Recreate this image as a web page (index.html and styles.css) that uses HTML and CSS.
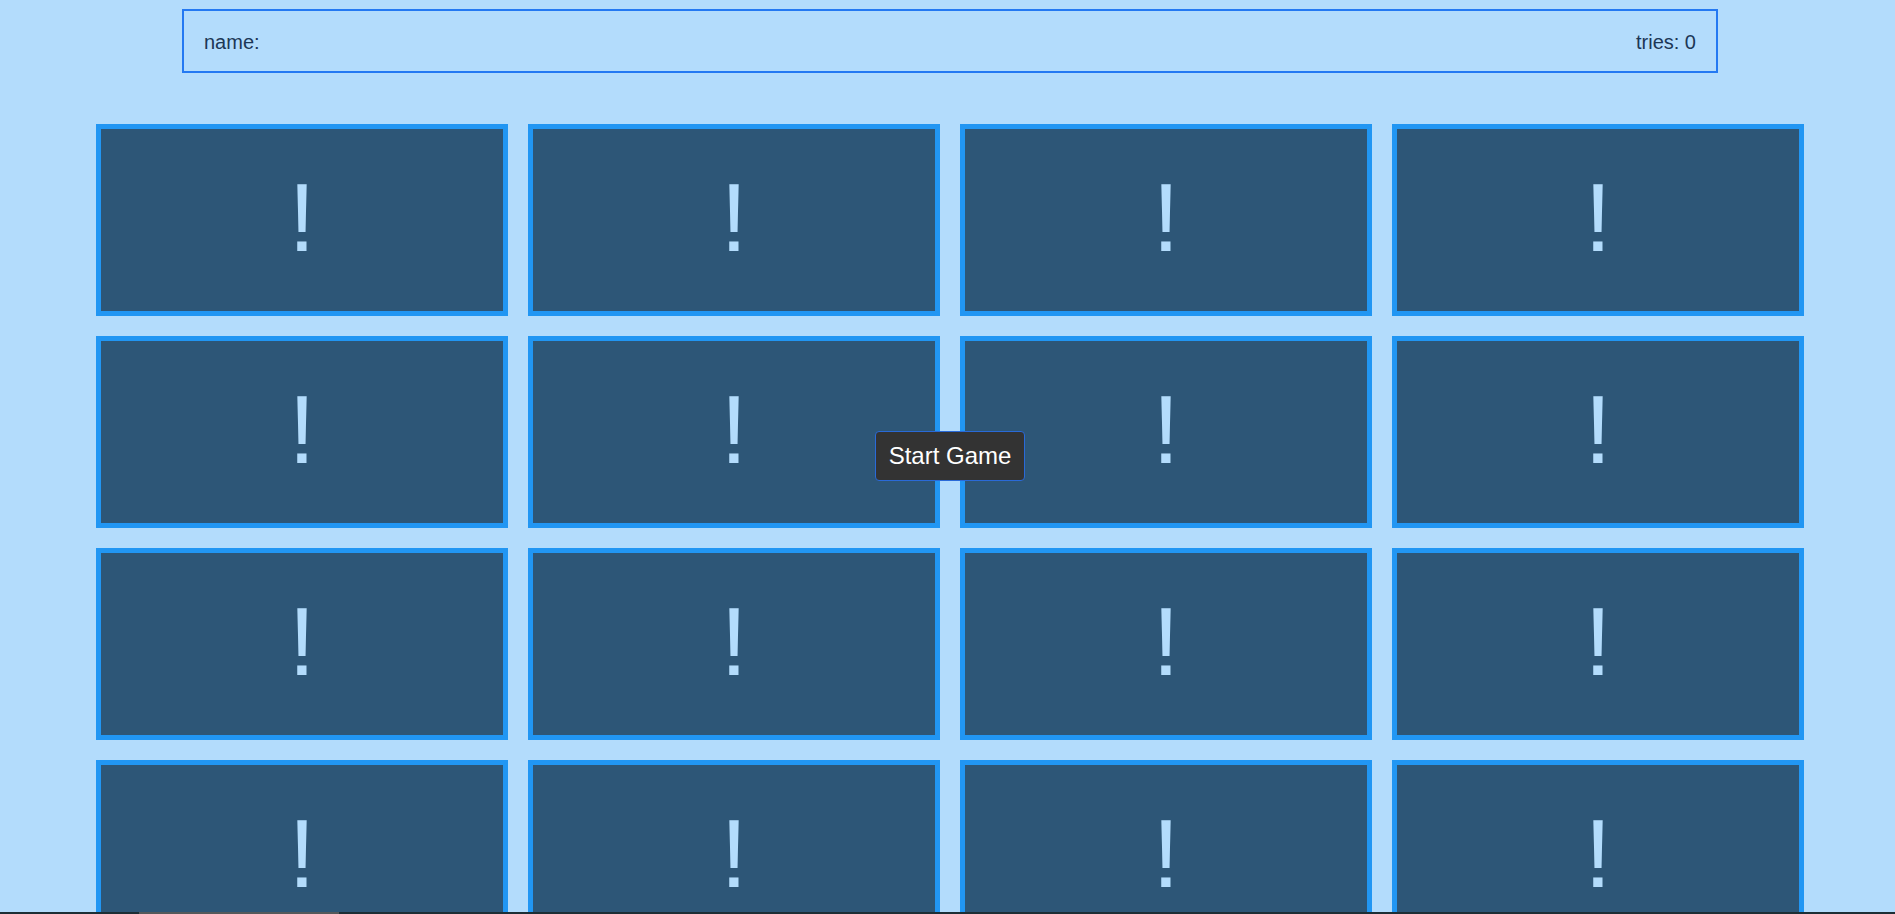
FILE: index.html
```html
<!DOCTYPE html>
<html lang="en">
<head>
<meta charset="utf-8">
<title>Memory</title>
<link rel="stylesheet" href="styles.css">
</head>
<body>
  <header class="info">
    <span class="info-name">name:</span>
    <span class="info-tries">tries: 0</span>
  </header>
  <main class="board">
    <div class="card">!</div>
    <div class="card">!</div>
    <div class="card">!</div>
    <div class="card">!</div>
    <div class="card">!</div>
    <div class="card">!</div>
    <div class="card">!</div>
    <div class="card">!</div>
    <div class="card">!</div>
    <div class="card">!</div>
    <div class="card">!</div>
    <div class="card">!</div>
    <div class="card">!</div>
    <div class="card">!</div>
    <div class="card">!</div>
    <div class="card">!</div>
  </main>
  <button class="start">Start Game</button>
  <div class="hbar"><div class="hbar-thumb"></div></div>
</body>
</html>
```

FILE: styles.css
```css
html, body {
  margin: 0;
  padding: 0;
  overflow: hidden;
}
body {
  background: #b3dcfc;
  font-family: "Liberation Sans", Arial, sans-serif;
  height: 914px;
}
.info {
  box-sizing: border-box;
  width: 1536px;
  height: 64px;
  margin: 9px 0 0 182px;
  border: 2px solid #2479f2;
  padding: 20px 20px 0 20px;
  display: flex;
  justify-content: space-between;
  font-size: 20px;
  line-height: 23px;
  color: #1c3756;
}
.board {
  margin: 51px 0 0 96px;
  width: 1708px;
  display: grid;
  grid-template-columns: repeat(4, 412px);
  grid-auto-rows: 192px;
  gap: 20px;
}
.card {
  box-sizing: border-box;
  border: 5px solid #2196f3;
  background: #2d5677;
  color: #b3dcfc;
  font-size: 97px;
  display: flex;
  align-items: center;
  justify-content: center;
  line-height: 1;
  padding-bottom: 6px;
}
.start {
  position: fixed;
  left: 875px;
  top: 431px;
  width: 150px;
  height: 50px;
  box-sizing: border-box;
  background: #333333;
  color: #ffffff;
  border: 1px solid #2a6ad8;
  border-radius: 4px;
  font-family: "Liberation Sans", Arial, sans-serif;
  font-size: 24px;
  padding: 0;
  display: flex;
  align-items: center;
  justify-content: center;
}
.hbar {
  position: fixed;
  left: 0;
  right: 0;
  bottom: 0;
  height: 2px;
  background: #1d2e35;
}
.hbar-thumb {
  margin-left: 139px;
  width: 200px;
  height: 2px;
  background: #55595b;
}
```
